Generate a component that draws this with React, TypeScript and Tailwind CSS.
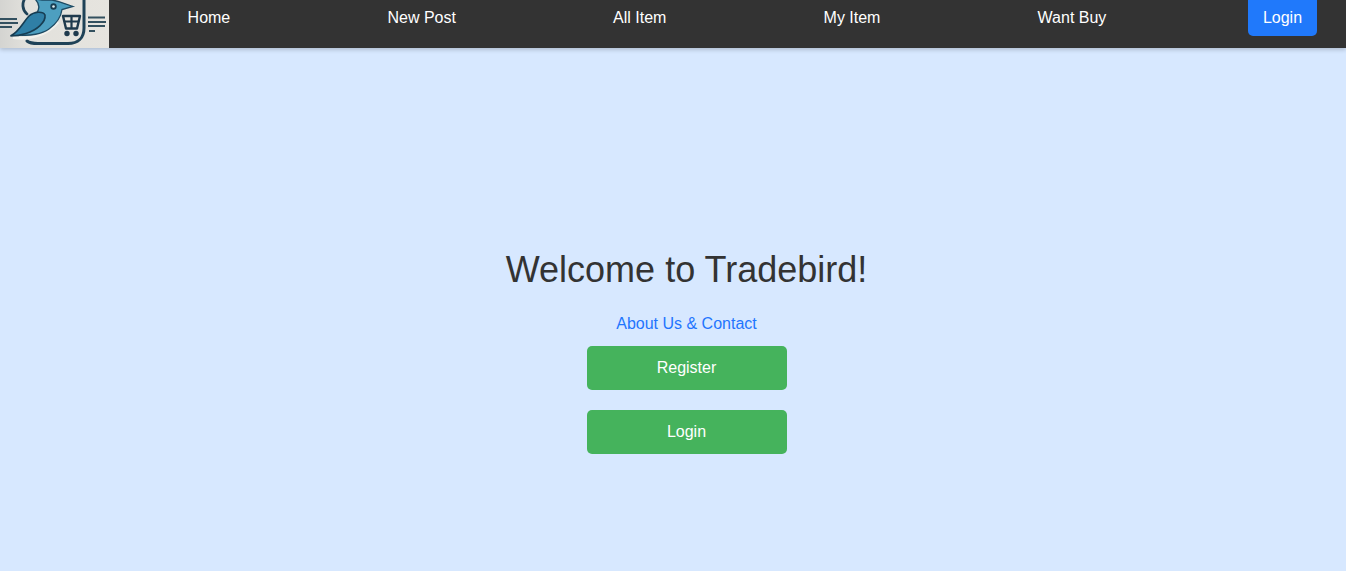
const NAV_LINKS = ["Home", "New Post", "All Item", "My Item", "Want Buy"];

function Logo() {
  return (
    <div className="h-12 w-[109px] shrink-0 overflow-hidden bg-[linear-gradient(90deg,#d4d4d1,#e2e1dc_25%,#e6e4df_100%)]">
      <svg viewBox="0 0 109 48" width="109" height="48" fill="none" className="blur-[0.4px]">
        {/* rounded frame behind the bird */}
        <path d="M25 -2 C22 3 22 10 27 14" stroke="#1f4257" strokeWidth="2.8" strokeLinecap="round" />
        <path d="M27 41 C30 43.5 34 43.5 38 43.5 L68 43.5 C78 43.5 84 38 84 28 L84 -2" stroke="#1f4257" strokeWidth="3" strokeLinecap="round" />
        <path d="M13 37.5 C28 40 46 36 58 22" stroke="#f2f1ec" strokeWidth="3" />
        {/* speed lines */}
        <path d="M0 19H17M0 23H18M0 27H12" stroke="#33505f" strokeWidth="2" />
        <path d="M88 17.5H105M88 22H106M88 26H105M89 31H95" stroke="#33505f" strokeWidth="1.9" />
        {/* head and body */}
        <path
          d="M35 -1 L42 0 L52 0 C58 1 66 4 73 6.5 L62 9.5 C61 17 56 24 49 29 C42 34 30 36 20 35 C28 28 31 20 36 14 C40 9 40 4 35 -1 Z"
          fill="#4d9fc0"
          stroke="#1d4a63"
          strokeWidth="1.3"
        />
        {/* wing */}
        <path d="M10.5 36 C20 31 23 22 29 16 C34 11.5 43 11 45 15 C46 22 37 30 26 33.5 C20 35.5 14 36 10.5 36 Z" fill="#2f7fa6" stroke="#173d52" strokeWidth="1.6" />
        <circle cx="53.5" cy="6.5" r="3.2" fill="#173d52" />
        <circle cx="53.5" cy="6.5" r="1.3" fill="#dfeef3" />
        {/* cart */}
        <path d="M63 16 L66 28.5 H77 L80 16 Z" fill="#e6e4df" stroke="#1f3a4d" strokeWidth="2.4" strokeLinejoin="round" />
        <path d="M64.5 21.5 H78.5 M71.5 16 V28.5" stroke="#1f3a4d" strokeWidth="2.2" />
        <circle cx="67" cy="33.5" r="2.7" fill="#1f3a4d" />
        <circle cx="76" cy="33.5" r="2.7" fill="#1f3a4d" />
      </svg>
    </div>
  );
}

export default function App() {
  return (
    <div className="flex min-h-[571px] flex-col bg-[#d7e8ff] font-['Liberation_Sans',Arial,sans-serif]">
      <nav className="relative flex h-12 items-start bg-[#333333] shadow-[0_2px_4px_rgba(0,0,0,0.18)]">
        <Logo />
        <ul className="flex h-[35px] flex-1 items-center justify-around">
          {NAV_LINKS.map((link) => (
            <li key={link}>
              <a href="#" className="text-base text-white">
                {link}
              </a>
            </li>
          ))}
        </ul>
        <button className="ml-[63px] mr-[29px] h-9 w-[69px] rounded-b-[5px] bg-[#2079fb] text-base text-white">
          Login
        </button>
      </nav>

      <main className="flex flex-col items-center pl-[27px] pt-[201px]">
        <h1 className="text-4xl leading-[41px] font-normal text-[#333333]">Welcome to Tradebird!</h1>
        <a href="#" className="mt-[25px] text-base leading-[18px] text-[#1f75fe]">
          About Us &amp; Contact
        </a>
        <button className="mt-[13px] h-11 w-[200px] rounded-[5px] bg-[#45b35c] text-base text-white">Register</button>
        <button className="mt-5 h-11 w-[200px] rounded-[5px] bg-[#45b35c] text-base text-white">Login</button>
      </main>
    </div>
  );
}
